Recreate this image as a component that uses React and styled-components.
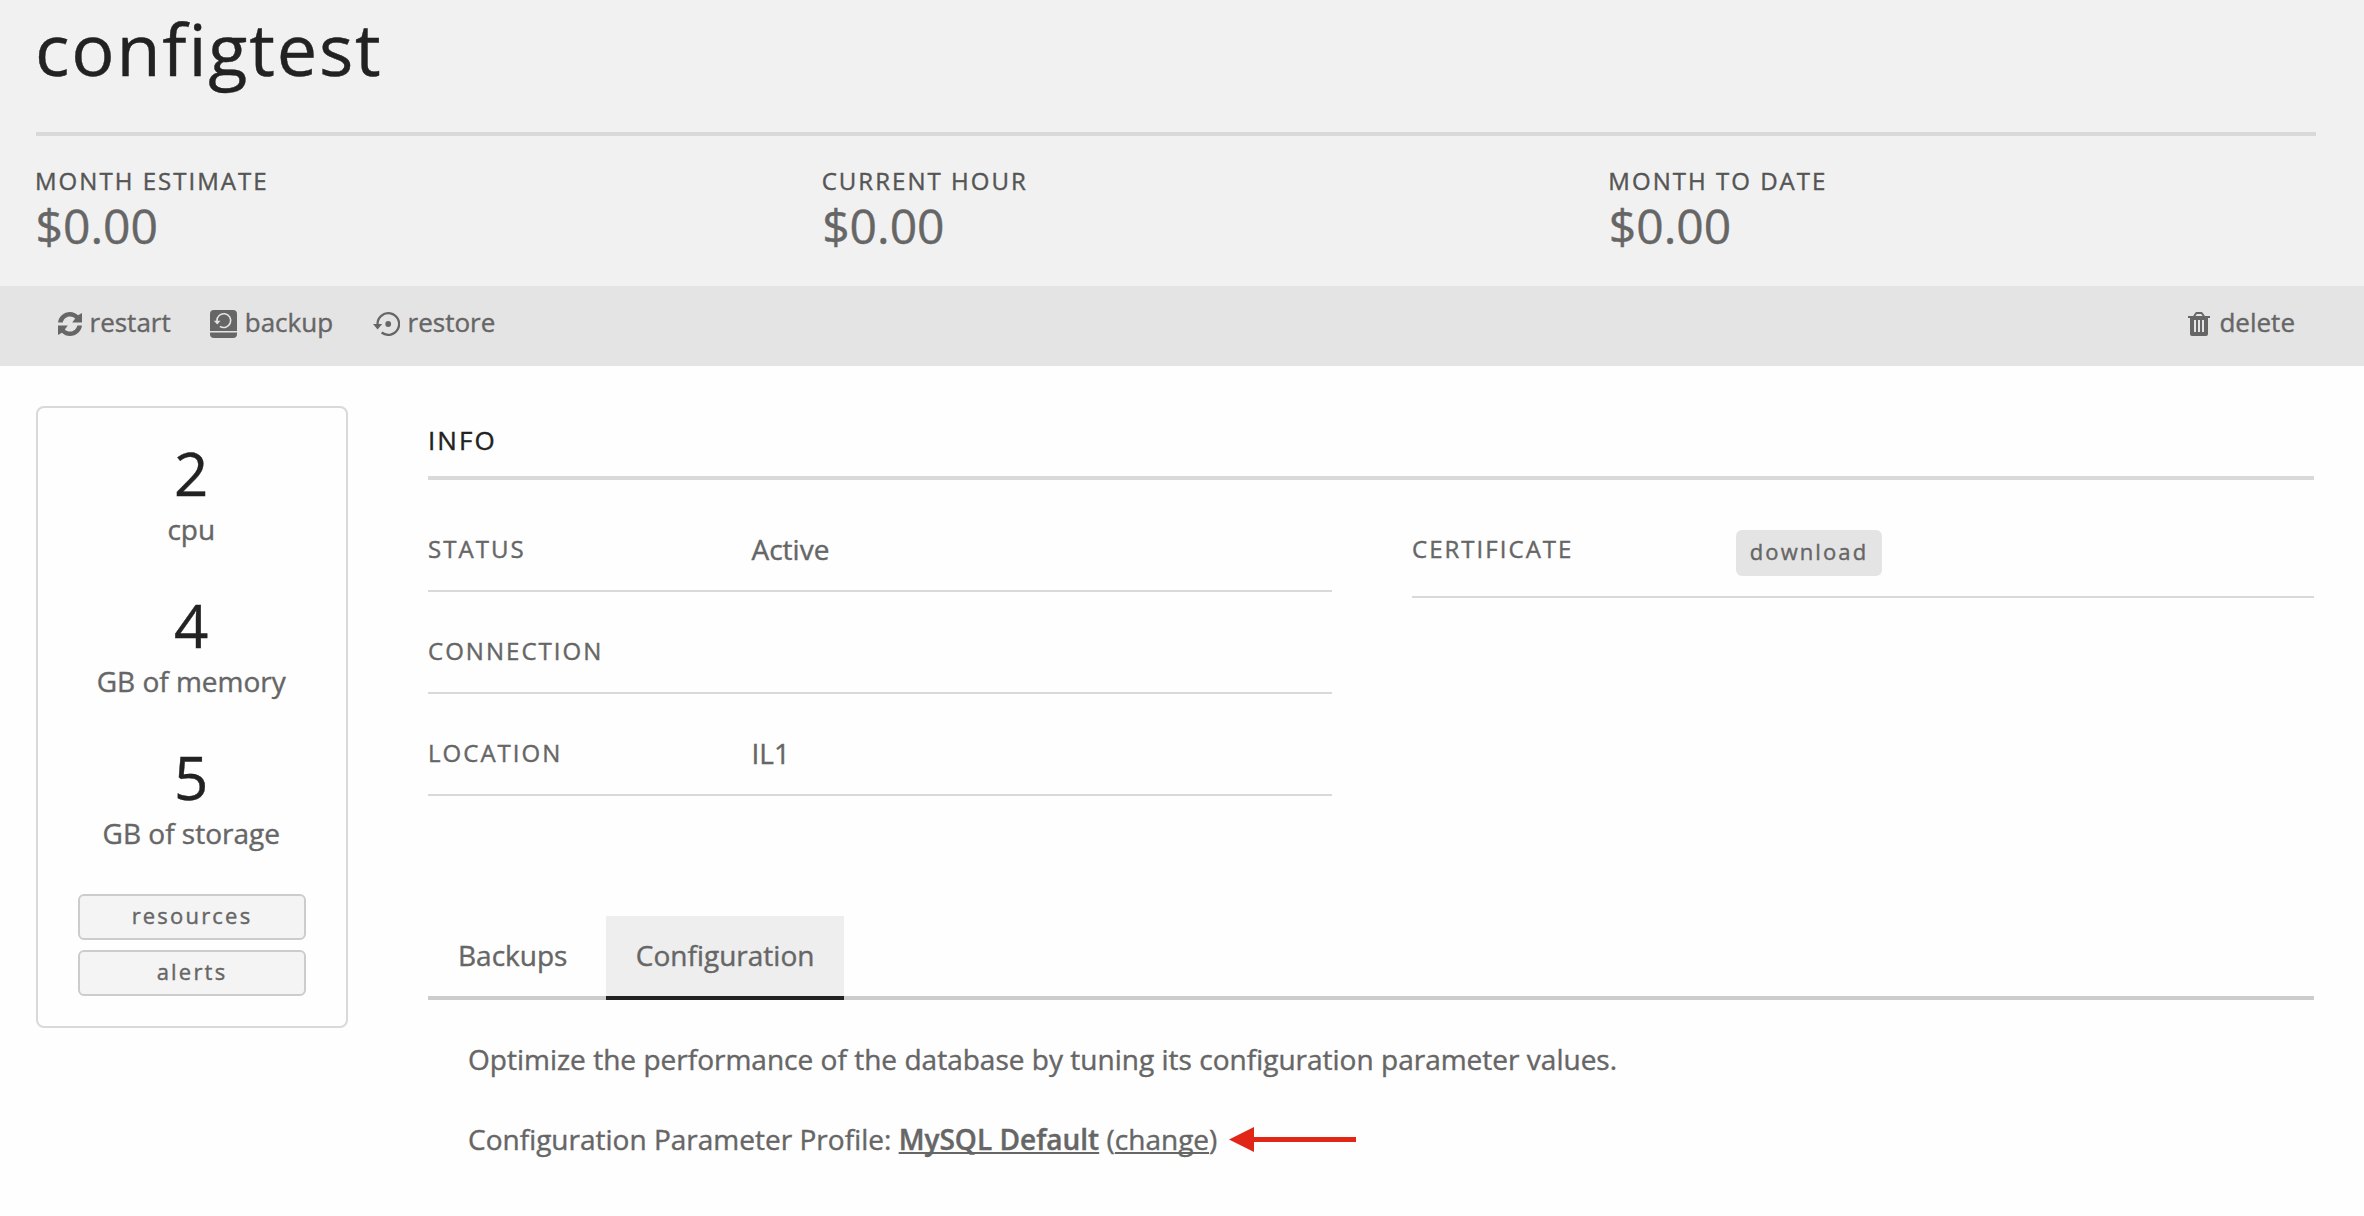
import React from 'react';
import styled, { createGlobalStyle } from 'styled-components';

const GlobalStyle = createGlobalStyle`
  *, *::before, *::after { box-sizing: border-box; }
  body {
    margin: 0;
    background: #fefefe;
    color: #666;
    font-family: 'Open Sans', 'Noto Sans', sans-serif;
    font-size: 28px;
    -webkit-font-smoothing: antialiased;
    -webkit-text-stroke: 0.4px currentColor;
  }
  h1, h2, p { margin: 0; font-weight: 400; }
`;

const Page = styled.div`
  min-height: 1216px;
  overflow: hidden;
`;

const Header = styled.header`
  height: 286px;
  padding: 0 48px 0 36px;
  background: #f1f1f1;
`;

const Title = styled.h1`
  height: 136px;
  border-bottom: 4px solid #d9d9d9;
  color: #222;
  font-size: 72px;
  line-height: 96px;
  letter-spacing: 1.8px;
  text-indent: -1px;
`;

const Costs = styled.div`
  display: grid;
  grid-template-columns: repeat(3, 786.67px);
  padding-top: 29px;
`;

const CostLabel = styled.div`
  color: #555;
  font-size: 24px;
  line-height: 32px;
  letter-spacing: 2.03px;
  margin-left: -1px;
`;

const CostValue = styled.div`
  padding-top: 1px;
  font-size: 48px;
  line-height: 56px;
  margin-left: -0.5px;
`;

const Toolbar = styled.nav`
  display: flex;
  align-items: flex-start;
  gap: 39.5px;
  height: 80px;
  padding: 20px 69px 0 58px;
  background: #e4e4e4;
`;

const Action = styled.button`
  display: flex;
  align-items: flex-start;
  gap: ${(p) => p.$gap || 6}px;
  margin: 0 0 0 ${(p) => (p.$end ? 'auto' : '0')};
  padding: 0;
  border: 0;
  background: none;
  color: inherit;
  font: inherit;
  font-size: 26px;
  line-height: 32px;

  svg { display: block; flex: none; margin-top: ${(p) => p.$iconTop || 6}px; }
`;

const Body = styled.div`
  display: flex;
  align-items: flex-start;
  gap: 80px;
  padding: 40px 50px 0 36px;
`;

const Card = styled.aside`
  flex: none;
  width: 312px;
  height: 622px;
  padding: 30px 40px 0;
  border: 2px solid #d9d9d9;
  border-radius: 8px;
  text-align: center;
`;

const Spec = styled.div`
  margin-bottom: 41px;
  padding-right: 1.5px;
`;

const SpecNumber = styled.div`
  color: #222;
  font-size: 60px;
  line-height: 70px;
`;

const SpecLabel = styled.div`
  margin-top: 1px;
  line-height: 40px;
  white-space: nowrap;
`;

const CardButton = styled.button`
  display: block;
  width: 228px;
  height: 46px;
  margin-bottom: 10px;
  padding: 0 0 3px;
  border: 2px solid #ccc;
  border-radius: 6px;
  background: #f4f4f4;
  color: inherit;
  font: inherit;
  font-size: 22px;
  line-height: 39px;
  letter-spacing: 2.2px;
`;

const Main = styled.main`
  flex: 1;
  min-width: 0;
  padding-top: 14px;
`;

const SectionTitle = styled.h2`
  height: 60px;
  border-bottom: 4px solid #d9d9d9;
  color: #222;
  font-size: 26px;
  line-height: 40px;
  letter-spacing: 2.1px;
`;

const InfoGrid = styled.div`
  display: grid;
  grid-template-columns: 904px 902px;
  gap: 80px;
  align-items: start;
  padding-top: 10px;
`;

const InfoRow = styled.div`
  display: flex;
  align-items: flex-start;
  height: ${(p) => (p.$tall ? 108 : 102)}px;
  padding-top: 40px;
  border-bottom: 2px solid #d9d9d9;
`;

const InfoLabel = styled.div`
  width: ${(p) => p.$width || 323.5}px;
  padding-top: 3px;
  font-size: 24px;
  line-height: 32px;
  letter-spacing: 2.03px;
`;

const InfoValue = styled.div`
  line-height: 38px;
`;

const Download = styled.button`
  display: block;
  height: 46px;
  width: 146px;
  padding: 0 0 4px;
  border: 0;
  border-radius: 6px;
  background: #e4e4e4;
  color: inherit;
  font: inherit;
  font-size: 22px;
  line-height: 42px;
  letter-spacing: 2.1px;
`;

const Tabs = styled.div`
  display: flex;
  gap: 8.6px;
  height: 84px;
  margin-top: 120px;
  border-bottom: 4px solid #ccc;
`;

const Tab = styled.button`
  height: 84px;
  margin: 0;
  padding: 0 29.8px 2px 30px;
  border: 0;
  border-bottom: 4px solid ${(p) => (p.$active ? '#222' : '#ccc')};
  background: ${(p) => (p.$active ? '#eee' : 'transparent')};
  color: inherit;
  font: inherit;
  line-height: 78px;
`;

const Panel = styled.section`
  display: grid;
  gap: 40px;
  padding: 39px 0 0 40px;
  line-height: 40px;
  word-spacing: 0.1px;
`;

const ProfileLine = styled.div`
  display: flex;
  align-items: flex-start;
`;

const Link = styled.a`
  font-weight: ${(p) => (p.$strong ? 600 : 400)};
  text-decoration: underline;
  text-decoration-thickness: 2px;
  text-decoration-skip-ink: none;
  text-underline-offset: 2px;
`;

const Arrow = styled.svg`
  display: block;
  margin: 8px 0 0 11.5px;
`;

const RestartIcon = () => (
  <svg width="24" height="24" viewBox="0 0 24 24" fill="currentColor">
    <path d="M0 10.500C0.800 4.400 6 0 12 0c3.200 0 6 1.300 8.100 3.300L24 1v9.500H14.200L17.200 6.600C15.800 5.200 14 4.400 12 4.400c-3.600 0-6.500 2.500-7.300 6.100z" />
    <path d="M24 13.500C23.200 19.600 18 24 12 24c-3.200 0-6-1.300-8.100-3.300L0 23v-9.500h9.800l-3 3.900c1.400 1.400 3.200 2.200 5.200 2.200 3.600 0 6.500-2.500 7.300-6.100z" />
  </svg>
);

const BackupIcon = () => (
  <svg width="28" height="28" viewBox="0 0 28 28">
    <path fill="currentColor" d="M4 0h19A4 4 0 0 1 27 4v17H0V4a4 4 0 0 1 4-4zM0 22.500h27V24a4 4 0 0 1-4 4H4a4 4 0 0 1-4-4z" />
    <path fill="none" stroke="#e4e4e4" strokeWidth="1.600" d="M6.900 11a6.900 6.900 0 1 1 3 5.300" />
    <path fill="#e4e4e4" d="M3.900 10.800h6.600L7.300 14.400z" />
  </svg>
);

const RestoreIcon = () => (
  <svg width="27" height="24" viewBox="0 0 27 24">
    <path fill="none" stroke="currentColor" strokeWidth="2.300" d="M4.500 12.500A10.800 10.800 0 1 1 8.600 20.500" />
    <path fill="currentColor" d="M0 12h9.200l-4.600 5.400z" />
    <circle cx="15.200" cy="12" r="2.900" fill="currentColor" />
  </svg>
);

const TrashIcon = () => (
  <svg width="22" height="24" viewBox="0 0 22 24">
    <path fill="none" stroke="currentColor" strokeWidth="2" d="M6.500 5V3.500L8.500 1h5l2 2.500V5" />
    <path fill="currentColor" fillRule="evenodd" d="M0 4h22v2h-2v16a2 2 0 0 1-2 2H4a2 2 0 0 1-2-2V6H0zM6 8v12h2V8zM10 8v12h2V8zM14 8v12h2V8z" />
  </svg>
);

const costs = ['MONTH ESTIMATE', 'CURRENT HOUR', 'MONTH TO DATE'];
const specs = [
  ['2', 'cpu'],
  ['4', 'GB of memory'],
  ['5', 'GB of storage'],
];
const info = [
  ['STATUS', 'Active'],
  ['CONNECTION', ''],
  ['LOCATION', 'IL1'],
];

export default function App() {
  return (
    <Page>
      <GlobalStyle />
      <Header>
        <Title>configtest</Title>
        <Costs>
          {costs.map((label) => (
            <div key={label}>
              <CostLabel>{label}</CostLabel>
              <CostValue>$0.00</CostValue>
            </div>
          ))}
        </Costs>
      </Header>
      <Toolbar>
        <Action $gap={7.5}><RestartIcon />restart</Action>
        <Action $iconTop={4} $gap={6.5}><BackupIcon />backup</Action>
        <Action $gap={8}><RestoreIcon />restore</Action>
        <Action $end $gap={9.4}><TrashIcon />delete</Action>
      </Toolbar>
      <Body>
        <Card>
          {specs.map(([n, label]) => (
            <Spec key={label}>
              <SpecNumber>{n}</SpecNumber>
              <SpecLabel>{label}</SpecLabel>
            </Spec>
          ))}
          <CardButton>resources</CardButton>
          <CardButton>alerts</CardButton>
        </Card>
        <Main>
          <SectionTitle>INFO</SectionTitle>
          <InfoGrid>
            <div>
              {info.map(([label, value]) => (
                <InfoRow key={label}>
                  <InfoLabel>{label}</InfoLabel>
                  <InfoValue>{value}</InfoValue>
                </InfoRow>
              ))}
            </div>
            <InfoRow $tall>
              <InfoLabel $width={324}>CERTIFICATE</InfoLabel>
              <Download>download</Download>
            </InfoRow>
          </InfoGrid>
          <Tabs>
            <Tab>Backups</Tab>
            <Tab $active>Configuration</Tab>
          </Tabs>
          <Panel>
            <p>Optimize the performance of the database by tuning its configuration parameter values.</p>
            <ProfileLine>
              <p>
                Configuration Parameter Profile: <Link $strong>MySQL Default</Link> (<Link>change</Link>)
              </p>
              <Arrow width="127" height="25" viewBox="0 0 127 25" fill="#e12617">
                <path d="M0 12.500L25 0v10h102v5H25v10z" />
              </Arrow>
            </ProfileLine>
          </Panel>
        </Main>
      </Body>
    </Page>
  );
}
